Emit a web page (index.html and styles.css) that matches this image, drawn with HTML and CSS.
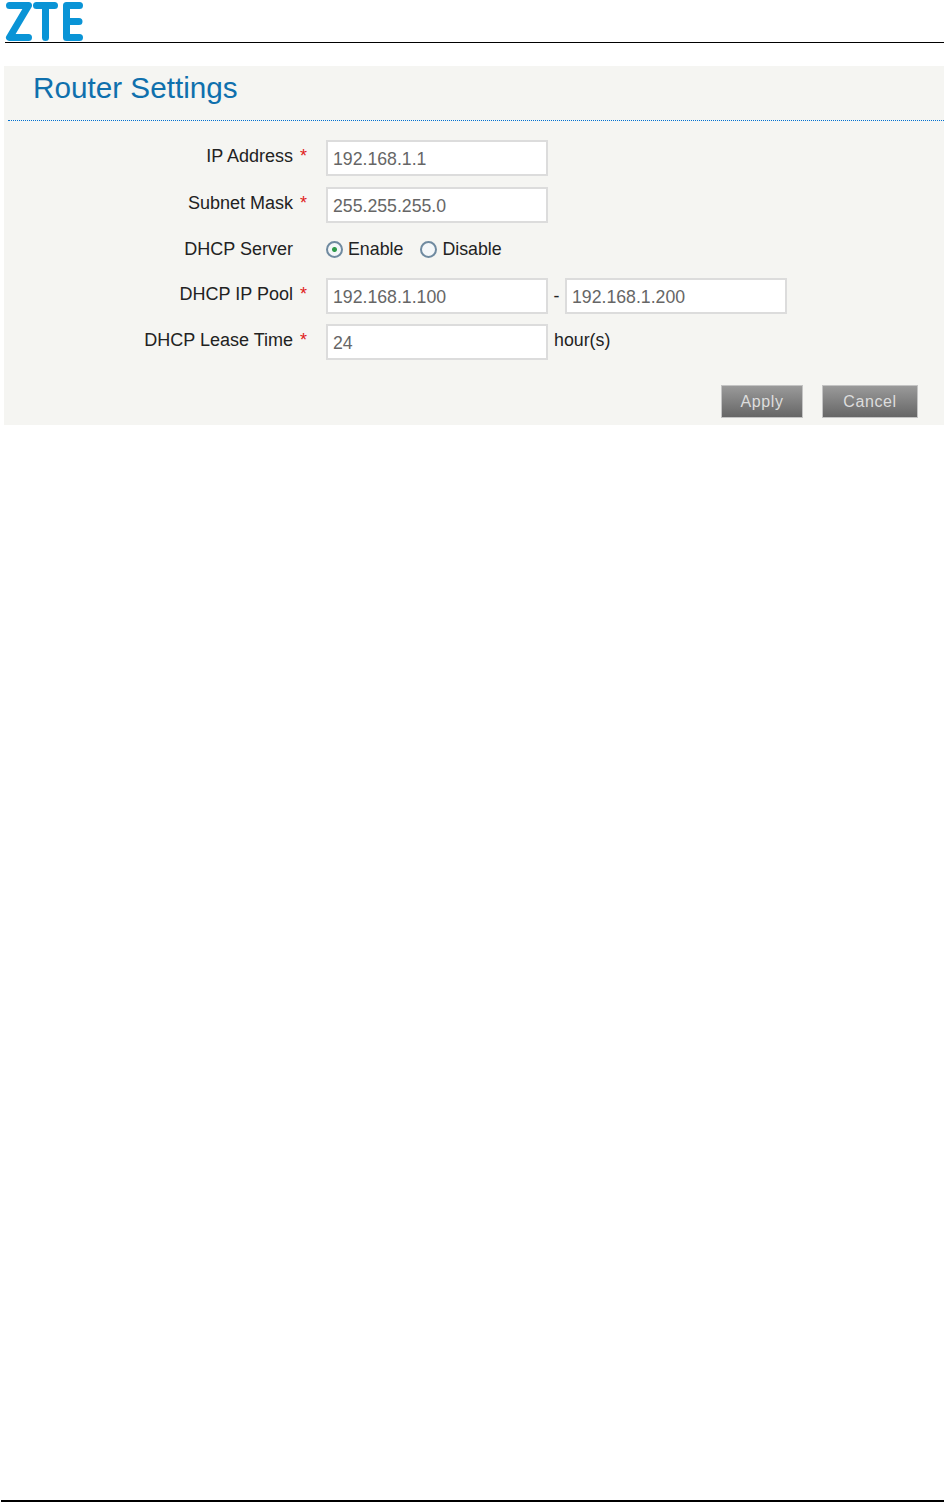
FILE: index.html
```html
<!DOCTYPE html>
<html lang="en">

<head>
    <meta charset="UTF-8">
    <meta name="viewport" content="width=device-width, initial-scale=1.0">
    <title>Router Settings</title>
    <link rel="stylesheet" href="styles.css">
</head>

<body>
    <header class="top">
        <svg class="logo" width="80" height="40" viewBox="0 0 80 40" aria-label="ZTE logo">
            <path d="M4.500 3.500H23.500L4.500 35.500H23.500" />
            <path d="M31.500 3.500H49.500M40.500 3.500V35.500" />
            <path d="M74.500 3.500H61.500V35.500H74.500M61.500 19.500H74" />
        </svg>
    </header>

    <main class="panel">
        <h1 class="title">Router Settings</h1>

        <form class="form">
            <div class="row row-first">
                <label class="name" for="ip">IP Address <span class="req">*</span></label>
                <input class="field" type="text" id="ip" value="192.168.1.1">
            </div>
            <div class="row">
                <label class="name" for="mask">Subnet Mask <span class="req">*</span></label>
                <input class="field" type="text" id="mask" value="255.255.255.0">
            </div>
            <div class="row row-radio">
                <span class="name">DHCP Server <span class="req req-none">*</span></span>
                <label class="choice"><input class="radio" type="radio" name="dhcp" checked>Enable</label>
                <label class="choice"><input class="radio" type="radio" name="dhcp">Disable</label>
            </div>
            <div class="row">
                <label class="name" for="pool1">DHCP IP Pool <span class="req">*</span></label>
                <input class="field" type="text" id="pool1" value="192.168.1.100">
                <span class="dash">-</span>
                <input class="field" type="text" id="pool2" value="192.168.1.200">
            </div>
            <div class="row">
                <label class="name" for="lease">DHCP Lease Time <span class="req">*</span></label>
                <input class="field" type="text" id="lease" value="24">
                <span class="unit">hour(s)</span>
            </div>

            <div class="actions">
                <button class="btn btn-apply" type="button">Apply</button>
                <button class="btn btn-cancel" type="button">Cancel</button>
            </div>
        </form>
    </main>

    <footer class="bottom"></footer>
</body>

</html>
```

FILE: styles.css
```css
* {
    box-sizing: border-box;
}

body {
    margin: 0;
    height: 1502px;
    overflow: hidden;
    background-color: #fff;
    font-family: "Liberation Sans", Arial, sans-serif;
    color: #222;
}

.top {
    height: 43px;
    margin-left: 5px;
    padding-top: 2px;
    border-bottom: 1px solid #000;
}

.logo {
    display: block;
}

.logo path {
    fill: none;
    stroke: #0a94d6;
    stroke-width: 7;
    stroke-linecap: round;
    stroke-linejoin: round;
}

.panel {
    height: 359px;
    margin: 23px 0 0 4px;
    background-color: #f5f5f2;
}

.title {
    height: 55px;
    margin: 0 0 0 4px;
    padding: 4px 0 0 25px;
    border-bottom: 1px dotted #0070d0;
    font-size: 29.700px;
    line-height: 36px;
    font-weight: normal;
    color: #0f70ad;
}

.form {
    padding-top: 19px;
}

.row {
    display: flex;
    align-items: center;
    height: 36px;
    margin-bottom: 10px;
    font-size: 17.800px;
}

.row-first {
    margin-bottom: 11px;
}

.row-radio {
    height: 33px;
    margin-bottom: 12px;
}

.name {
    width: 303px;
    margin: -3px 19px 0 0;
    font-size: 18px;
    text-align: right;
    white-space: nowrap;
}

.row-radio .name {
    margin-top: 0;
}

.req {
    margin-left: 2px;
    color: #e02020;
}

.req-none {
    visibility: hidden;
}

.field {
    width: 222px;
    height: 36px;
    padding: 2px 5px 0;
    border: 2px solid #dcdcdc;
    background-color: #fff;
    font-family: inherit;
    font-size: 17.700px;
    color: #666;
}

.choice {
    display: flex;
    align-items: center;
    margin-right: 17px;
}

.radio {
    appearance: none;
    width: 17px;
    height: 17px;
    margin: 0 5px 0 0;
    border: 2px solid #6f8aa0;
    border-radius: 50%;
    background-color: #f4f7f9;
}

.radio:checked {
    background: radial-gradient(circle, #2f9a4a 0, #2f9a4a 2px, #f4f7f9 3px);
}

.dash {
    width: 17px;
    text-align: center;
}

.unit {
    margin: -4px 0 0 6px;
}

.actions {
    display: flex;
    justify-content: flex-end;
    gap: 19px;
    padding: 15px 26px 0 0;
}

.btn {
    height: 33px;
    padding: 0;
    border: 1px solid #c4c4c4;
    background: linear-gradient(#9a9a9a, #666);
    font-family: inherit;
    font-size: 16px;
    letter-spacing: 0.600px;
    color: #ddd;
}

.btn-apply {
    width: 82px;
}

.btn-cancel {
    width: 96px;
}

.bottom {
    height: 2px;
    margin: 1075px 0 0 1px;
    background-color: #000;
}
```
